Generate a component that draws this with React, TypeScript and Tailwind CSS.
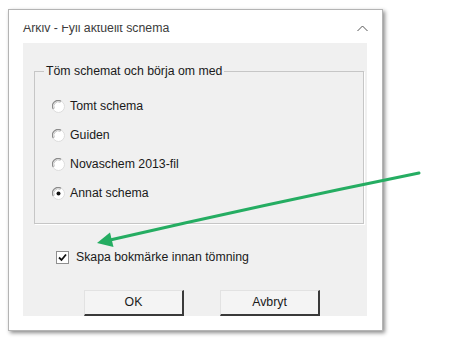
import React from "react";

const font = { fontFamily: '"Liberation Sans", Arial, sans-serif' };

// Sunken Windows-style radio
const Radio = ({ checked }: { checked?: boolean }) => (
    <svg width="13" height="13" viewBox="0 0 13 13" className="shrink-0">
        <circle cx="6.5" cy="6.5" r="6" fill="#ffffff" stroke="#dcdcdc" />
        <path d="M1.3 9 A5.6 5.6 0 0 1 9 1.3" fill="none" stroke="#8a8a8a" strokeWidth="1.1" />
        <path d="M2.4 8.4 A4.4 4.4 0 0 1 8.4 2.4" fill="none" stroke="#c4c4c4" strokeWidth="1" />
        {checked && <circle cx="6.5" cy="6.5" r="2" fill="#111" />}
    </svg>
);

const RadioRow = ({ label, checked }: { label: string; checked?: boolean }) => (
    <div className="h-[29px] flex items-center pl-[17px] gap-[5px]">
        <Radio checked={checked} />
        <span className="text-[12.3px] text-[#1a1a1a] leading-none">{label}</span>
    </div>
);

const Button = ({ label }: { label: string }) => (
    <button className="w-[100px] h-[26px] bg-[#f4f4f4] border-t border-l border-t-[#e2e2e2] border-l-[#e2e2e2] border-r-2 border-b-2 border-r-[#3a3a3a] border-b-[#3a3a3a] text-[12.3px] text-[#1a1a1a] flex items-center justify-center">
        {label}
    </button>
);

export default function App() {
    return (
        <div className="relative w-[463px] h-[346px] bg-white overflow-hidden" style={font}>
            {/* DIALOG */}
            <div className="ml-[8px] mt-[9px] w-[375px] h-[322px] bg-white border border-[#b4b4b4] shadow-[2px_2px_4px_rgba(0,0,0,0.45)] flex flex-col">
                <div className="h-[15px] shrink-0"></div>
                <div className="h-[18px] shrink-0 overflow-hidden flex justify-between pl-[14px] pr-[14px]">
                    <span className="-mt-[3px] text-[12.3px] leading-[12px] text-[#3c3c3c] whitespace-nowrap">Arkiv - Fyll aktuellt schema</span>
                    <svg width="11" height="7" viewBox="0 0 11 7" className="mt-[0px]">
                        <path d="M0.5 6 L5.5 1 L10.5 6" fill="none" stroke="#555" strokeWidth="1" />
                    </svg>
                </div>

                <div className="ml-[14px] w-[344px] h-[273px] bg-[#f0f0f0] flex flex-col">
                    {/* GROUP BOX */}
                    <div className="relative mt-[28px] ml-[11px] w-[330px] border border-[#c6c6c6] shadow-[1px_1px_0_#ffffff] pt-[20px] pb-[15px]">
                        <span className="absolute -top-[8px] left-[9px] px-[2px] bg-[#f0f0f0] text-[12.3px] leading-[14px] text-[#1a1a1a] whitespace-nowrap">
                            Töm schemat och börja om med
                        </span>
                        <RadioRow label="Tomt schema" />
                        <RadioRow label="Guiden" />
                        <RadioRow label="Novaschem 2013-fil" />
                        <RadioRow label="Annat schema" checked />
                    </div>

                    {/* CHECKBOX */}
                    <div className="mt-[25px] h-[16px] ml-[33px] flex items-center gap-[7px]">
                        <div className="w-[13px] h-[13px] bg-white border border-[#8f8f8f] flex items-center justify-center">
                            <svg width="9" height="9" viewBox="0 0 9 9">
                                <path d="M1 4.5 L3.5 7 L8 1.5" fill="none" stroke="#111" strokeWidth="1.8" />
                            </svg>
                        </div>
                        <span className="text-[12.3px] text-[#1a1a1a] leading-none">Skapa bokmärke innan tömning</span>
                    </div>

                    {/* BUTTONS */}
                    <div className="mt-[25px] ml-[61px] flex gap-[36px]">
                        <Button label="OK" />
                        <Button label="Avbryt" />
                    </div>
                </div>
            </div>

            {/* ANNOTATION ARROW */}
            <svg className="absolute inset-0 pointer-events-none" width="463" height="346" viewBox="0 0 463 346">
                <path d="M419 173 Q262 205 110 240" fill="none" stroke="#25ad62" strokeWidth="3" strokeLinecap="round" />
                <polygon points="97,243 110,232.5 113.5,247" fill="#25ad62" />
            </svg>
        </div>
    );
}
